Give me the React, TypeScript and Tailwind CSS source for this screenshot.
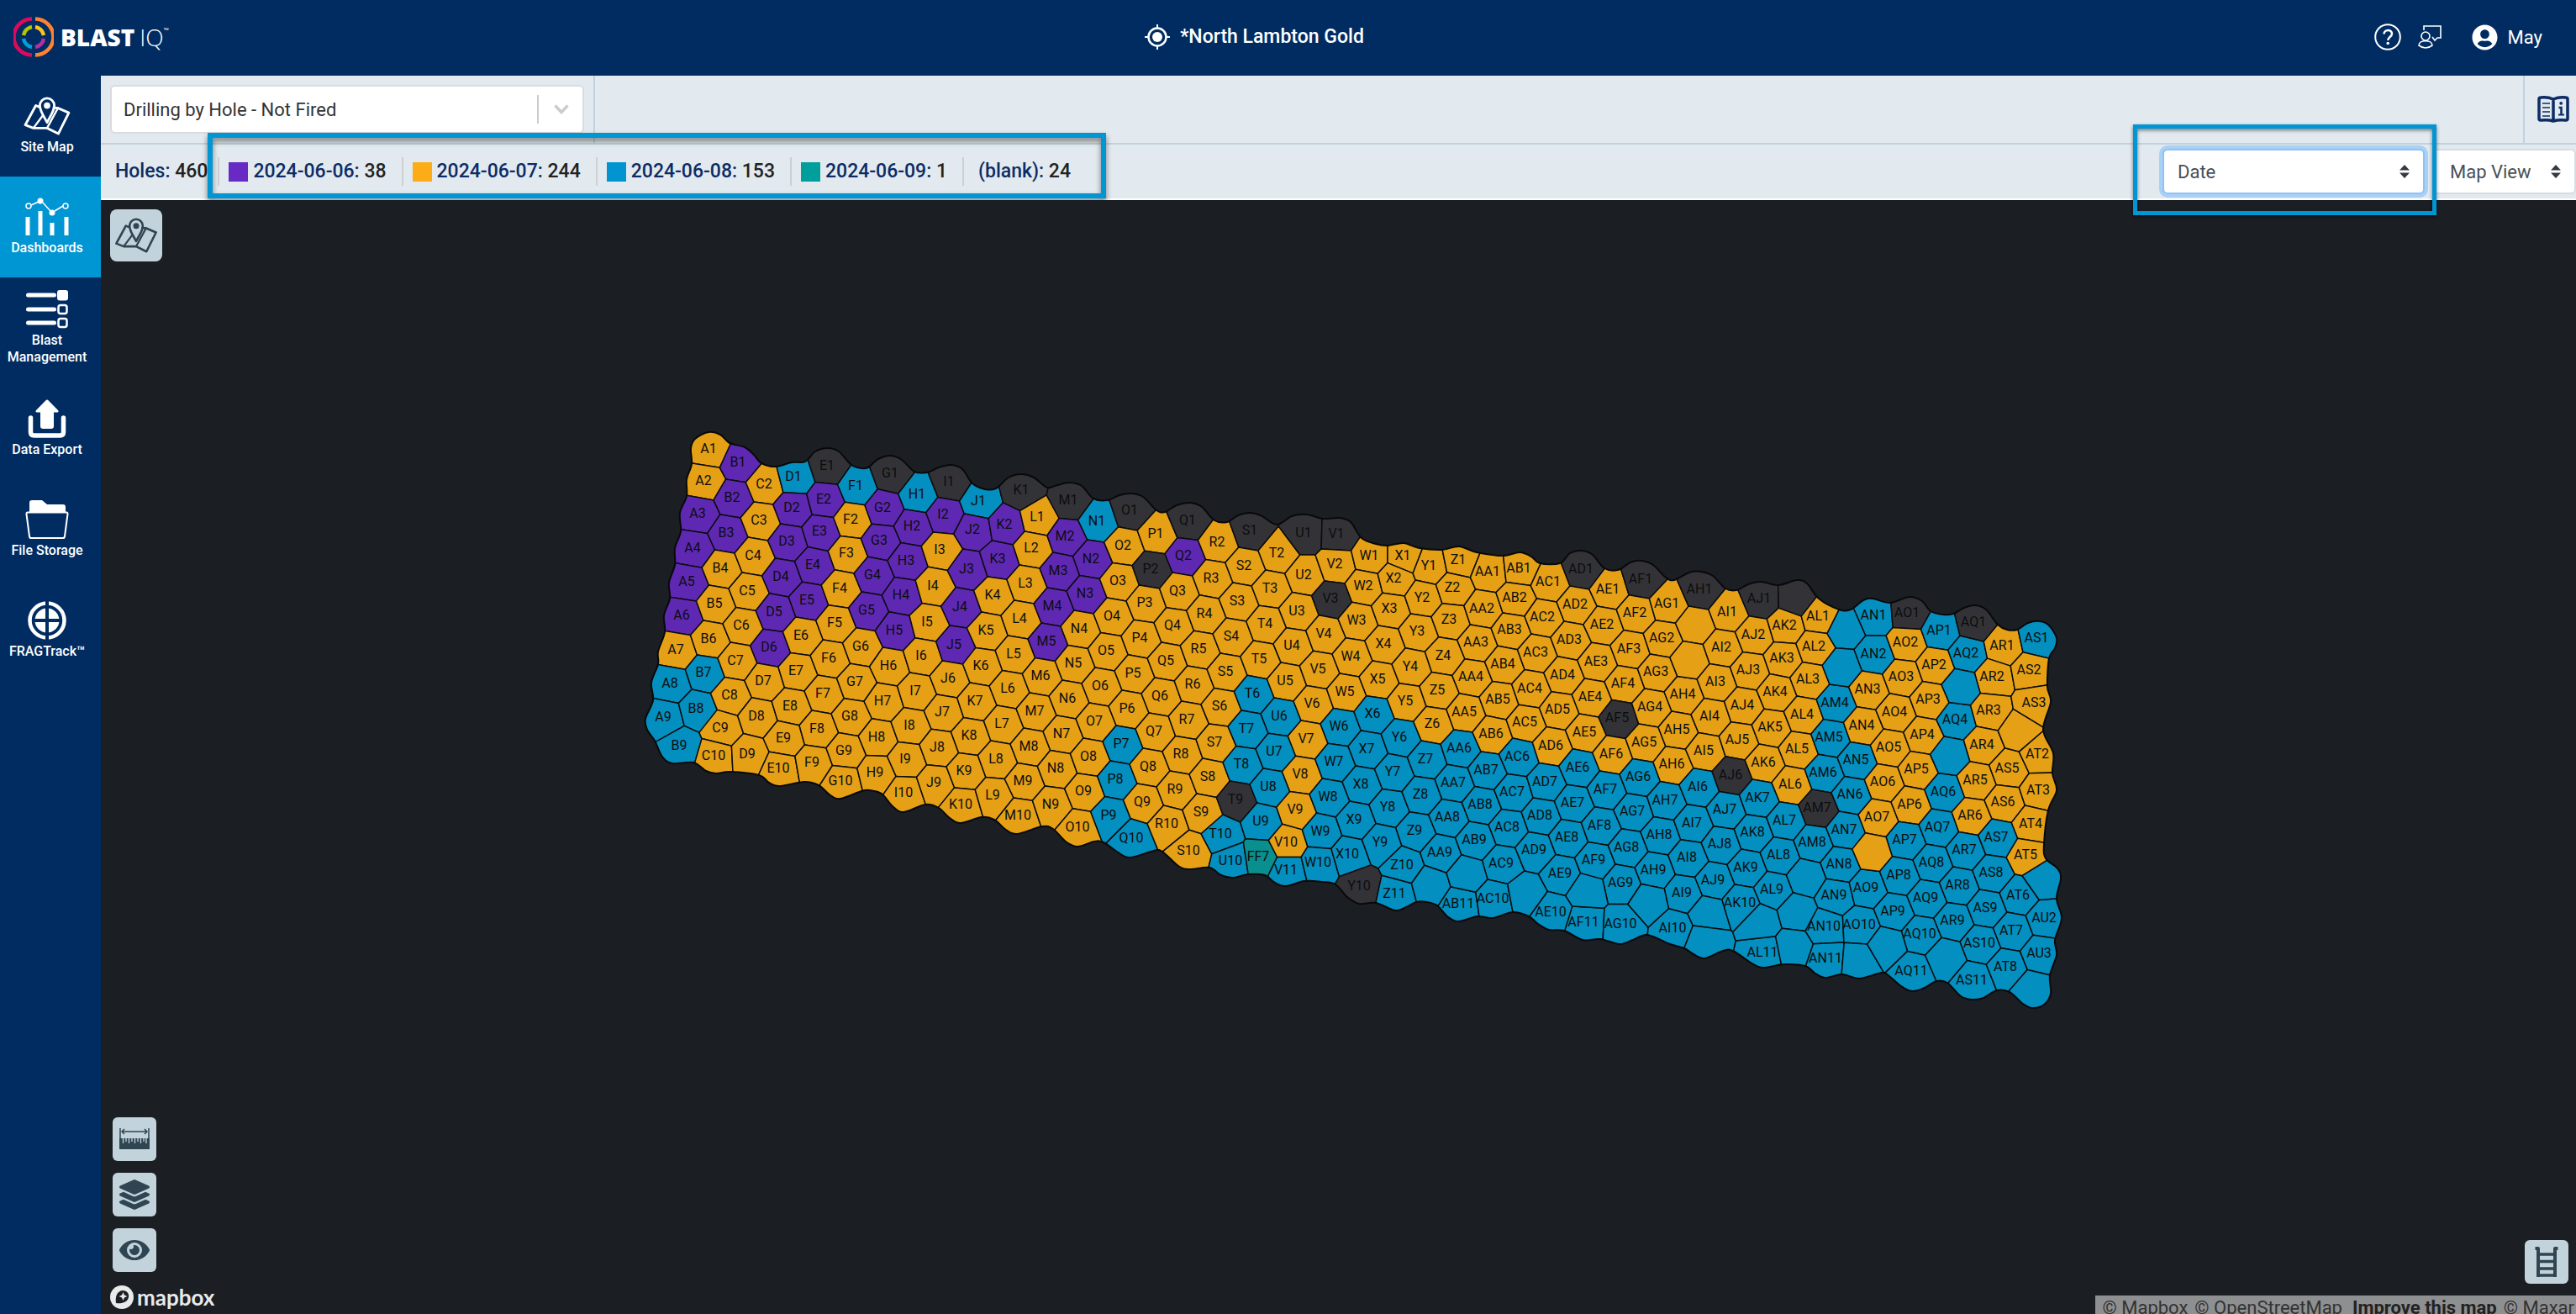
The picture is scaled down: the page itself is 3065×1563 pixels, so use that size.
import type { ReactNode } from 'react';
import { FaEye, FaLayerGroup, FaUserCircle } from 'react-icons/fa';

type Point = [number, number];

type Column = {
  name: string;
  first: number;
  fill: string; // one letter per hole, see CELL_COLORS
  at: number[]; // x, y pairs
};

const CELL_COLORS: Record<string, string> = {
  o: '#e5a016',
  p: '#5f28b3',
  b: '#038fbf',
  t: '#098f8d',
  k: '#333337',
};

const LABEL_SHIFT = 2;

const columns: Column[] = [
  { name: 'A', first: 1, fill: 'ooppppobb', at: [843, 533, 837, 571, 830, 610, 824, 651, 817, 691, 811, 731, 804, 772, 797, 812, 789, 852] },
  { name: 'B', first: 1, fill: 'pppooobbb', at: [878, 549, 871, 591, 864, 633, 857, 675, 850, 717, 843, 759, 837, 799, 828, 842, 808, 886] },
  { name: 'C', first: 2, fill: 'ooooooooo', at: [909, 575, 903, 618, 896, 660, 889, 702, 882, 743, 875, 785, 868, 826, 857, 865, 849, 898] },
  { name: 'D', first: 1, fill: 'bpppppooo', at: [944, 566, 942, 603, 936, 643, 929, 685, 921, 727, 915, 769, 908, 809, 900, 851, 889, 896] },
  { name: 'E', first: 1, fill: 'kppppooooo', at: [984, 553, 980, 593, 975, 631, 967, 671, 960, 713, 953, 755, 947, 797, 940, 839, 932, 877, 926, 913] },
  { name: 'F', first: 1, fill: 'boooooooo', at: [1018, 577, 1012, 617, 1007, 657, 999, 699, 993, 740, 986, 782, 979, 824, 972, 866, 966, 906] },
  { name: 'G', first: 1, fill: 'kppppooooo', at: [1059, 562, 1050, 603, 1046, 642, 1038, 683, 1031, 725, 1024, 768, 1017, 810, 1011, 851, 1004, 892, 1000, 928] },
  { name: 'H', first: 1, fill: 'bppppoooo', at: [1091, 587, 1085, 625, 1078, 666, 1072, 707, 1064, 749, 1057, 791, 1050, 833, 1043, 876, 1041, 918] },
  { name: 'I', first: 1, fill: 'kpoooooooo', at: [1129, 572, 1122, 611, 1118, 653, 1110, 696, 1103, 739, 1096, 779, 1089, 821, 1082, 862, 1077, 902, 1075, 942] },
  { name: 'J', first: 1, fill: 'bppppoooo', at: [1164, 595, 1157, 629, 1150, 676, 1142, 721, 1135, 766, 1128, 806, 1121, 846, 1115, 888, 1111, 930] },
  { name: 'K', first: 1, fill: 'kppooooooo', at: [1215, 582, 1195, 623, 1187, 664, 1181, 707, 1173, 749, 1167, 791, 1160, 833, 1153, 874, 1147, 916, 1143, 956] },
  { name: 'L', first: 1, fill: 'ooooooooo', at: [1234, 614, 1227, 651, 1220, 693, 1213, 735, 1206, 777, 1199, 818, 1192, 860, 1185, 902, 1181, 945] },
  { name: 'M', first: 1, fill: 'kppppooooo', at: [1271, 594, 1267, 637, 1259, 678, 1252, 720, 1245, 762, 1238, 803, 1231, 845, 1224, 887, 1217, 928, 1211, 969] },
  { name: 'N', first: 1, fill: 'bppoooooo', at: [1305, 619, 1298, 664, 1291, 705, 1284, 747, 1277, 788, 1270, 830, 1263, 872, 1256, 913, 1250, 956] },
  { name: 'O', first: 1, fill: 'kooooooooo', at: [1344, 606, 1336, 648, 1330, 690, 1323, 732, 1316, 773, 1309, 815, 1302, 857, 1295, 899, 1289, 940, 1282, 983] },
  { name: 'P', first: 1, fill: 'okoooobbb', at: [1375, 634, 1369, 676, 1362, 716, 1356, 758, 1348, 800, 1341, 842, 1334, 884, 1327, 926, 1319, 969] },
  { name: 'Q', first: 1, fill: 'kpooooooob', at: [1413, 618, 1408, 660, 1401, 702, 1395, 743, 1387, 785, 1380, 827, 1373, 869, 1366, 911, 1359, 953, 1346, 996] },
  { name: 'R', first: 2, fill: 'ooooooooo', at: [1448, 644, 1441, 687, 1433, 729, 1426, 771, 1419, 813, 1412, 855, 1405, 896, 1398, 938, 1388, 979] },
  { name: 'S', first: 1, fill: 'kooooooooo', at: [1487, 630, 1480, 672, 1472, 714, 1465, 756, 1458, 798, 1451, 839, 1445, 882, 1437, 923, 1429, 965, 1414, 1011] },
  { name: 'T', first: 2, fill: 'oooobbbkb', at: [1519, 657, 1511, 699, 1505, 741, 1498, 783, 1490, 824, 1483, 866, 1477, 908, 1470, 950, 1452, 991] },
  { name: 'U', first: 1, fill: 'koooobbbbb', at: [1551, 633, 1551, 683, 1543, 726, 1537, 767, 1529, 809, 1522, 851, 1516, 893, 1509, 935, 1500, 976, 1464, 1023] },
  { name: 'FF', first: 7, fill: 't', at: [1497, 1018] },
  { name: 'V', first: 1, fill: 'kokooooooob', at: [1590, 634, 1588, 670, 1583, 711, 1575, 753, 1568, 795, 1561, 836, 1554, 878, 1547, 920, 1541, 962, 1530, 1001, 1530, 1034] },
  { name: 'W', first: 1, fill: 'ooooobbbbb', at: [1629, 660, 1622, 696, 1614, 737, 1607, 780, 1600, 822, 1593, 863, 1587, 905, 1580, 947, 1571, 988, 1568, 1025] },
  { name: 'X', first: 1, fill: 'ooooobbbbb', at: [1669, 660, 1658, 687, 1653, 723, 1646, 765, 1639, 807, 1633, 848, 1626, 890, 1619, 932, 1611, 974, 1603, 1015] },
  { name: 'Y', first: 1, fill: 'ooooobbbbk', at: [1700, 672, 1692, 710, 1686, 750, 1678, 792, 1672, 833, 1665, 876, 1657, 917, 1651, 959, 1642, 1001, 1617, 1053] },
  { name: 'Z', first: 1, fill: 'oooooobbbbb', at: [1735, 665, 1728, 698, 1724, 736, 1717, 779, 1710, 820, 1704, 860, 1696, 902, 1690, 944, 1683, 987, 1668, 1028, 1659, 1062] },
  { name: 'AA', first: 1, fill: 'ooooobbbb', at: [1770, 679, 1763, 723, 1756, 763, 1750, 804, 1742, 846, 1736, 889, 1729, 930, 1722, 971, 1713, 1013] },
  { name: 'AB', first: 1, fill: 'oooooobbb', at: [1807, 675, 1802, 710, 1796, 748, 1788, 789, 1782, 831, 1774, 872, 1768, 915, 1761, 956, 1754, 998] },
  { name: 'AB', first: 11, fill: 'b', at: [1735, 1074] },
  { name: 'AC', first: 1, fill: 'ooooobbbbb', at: [1842, 691, 1835, 733, 1827, 775, 1820, 818, 1814, 858, 1805, 899, 1799, 941, 1793, 983, 1786, 1026, 1776, 1068] },
  { name: 'AD', first: 1, fill: 'kooooobbb', at: [1881, 676, 1874, 718, 1867, 760, 1859, 802, 1853, 843, 1845, 886, 1838, 929, 1832, 969, 1825, 1010] },
  { name: 'AE', first: 1, fill: 'ooooobbbbb', at: [1913, 700, 1906, 742, 1899, 786, 1892, 828, 1885, 870, 1877, 912, 1871, 954, 1864, 995, 1856, 1038, 1845, 1084] },
  { name: 'AF', first: 1, fill: 'koookobbb', at: [1952, 688, 1945, 728, 1938, 771, 1931, 812, 1924, 853, 1917, 896, 1910, 938, 1903, 981, 1896, 1022] },
  { name: 'AF', first: 11, fill: 'b', at: [1884, 1096] },
  { name: 'AG', first: 1, fill: 'ooooobbbbb', at: [1983, 717, 1977, 758, 1970, 798, 1963, 840, 1956, 882, 1949, 923, 1942, 964, 1935, 1007, 1928, 1049, 1928, 1098] },
  { name: 'AH', first: 1, fill: 'k', at: [2022, 700] },
  { name: 'AH', first: 4, fill: 'ooobbb', at: [2002, 825, 1995, 867, 1989, 908, 1981, 951, 1974, 992, 1967, 1034] },
  { name: 'AI', first: 1, fill: 'ooooobbbbb', at: [2055, 727, 2048, 769, 2041, 810, 2034, 851, 2027, 892, 2020, 935, 2013, 978, 2007, 1019, 2001, 1061, 1990, 1103] },
  { name: 'AJ', first: 1, fill: 'kooookbbb', at: [2093, 711, 2086, 754, 2080, 796, 2073, 838, 2067, 879, 2059, 921, 2052, 962, 2046, 1003, 2038, 1046] },
  { name: 'AK', first: 2, fill: 'ooooobbbb', at: [2123, 743, 2120, 782, 2112, 822, 2106, 864, 2098, 906, 2091, 948, 2085, 989, 2077, 1031, 2070, 1073] },
  { name: 'AL', first: 1, fill: 'oooooobbb', at: [2163, 732, 2158, 768, 2151, 807, 2144, 849, 2138, 890, 2130, 932, 2123, 975, 2116, 1016, 2108, 1057] },
  { name: 'AL', first: 11, fill: 'b', at: [2097, 1132] },
  { name: 'AM', first: 4, fill: 'bbbkb', at: [2183, 835, 2176, 876, 2169, 918, 2162, 960, 2156, 1001] },
  { name: 'AN', first: 1, fill: 'bboobbbbbbb', at: [2229, 731, 2229, 777, 2222, 819, 2215, 862, 2208, 903, 2201, 944, 2194, 986, 2188, 1027, 2182, 1064, 2170, 1101, 2172, 1139] },
  { name: 'AO', first: 1, fill: 'koooooo', at: [2269, 728, 2267, 763, 2262, 804, 2254, 846, 2247, 888, 2240, 929, 2233, 971] },
  { name: 'AO', first: 9, fill: 'bb', at: [2220, 1055, 2212, 1099] },
  { name: 'AP', first: 1, fill: 'booooobbb', at: [2307, 749, 2301, 790, 2294, 831, 2287, 873, 2280, 914, 2272, 956, 2266, 998, 2259, 1040, 2252, 1083] },
  { name: 'AQ', first: 1, fill: 'kb', at: [2348, 739, 2339, 776] },
  { name: 'AQ', first: 4, fill: 'b', at: [2326, 855] },
  { name: 'AQ', first: 6, fill: 'bbbbbb', at: [2312, 941, 2305, 983, 2298, 1025, 2291, 1067, 2284, 1110, 2274, 1154] },
  { name: 'AR', first: 1, fill: 'oooooobbb', at: [2382, 767, 2370, 804, 2366, 844, 2358, 885, 2350, 927, 2344, 969, 2337, 1010, 2329, 1052, 2323, 1094] },
  { name: 'AS', first: 1, fill: 'boo', at: [2423, 758, 2414, 796, 2420, 835] },
  { name: 'AS', first: 5, fill: 'oobbbbb', at: [2388, 913, 2383, 953, 2375, 995, 2369, 1037, 2362, 1079, 2355, 1121, 2346, 1165] },
  { name: 'AT', first: 2, fill: 'oooobbb', at: [2424, 896, 2425, 939, 2416, 979, 2410, 1016, 2401, 1064, 2393, 1106, 2386, 1149] },
  { name: 'AU', first: 2, fill: 'bb', at: [2432, 1091, 2426, 1133] },
  // holes without a label
  {
    name: '',
    first: 0,
    fill: 'bbbbboobbbkbbbbbbobbbbbobb',
    at: [
      1700, 1051, 1743, 1038, 1813, 1061, 1886, 1058, 1960, 1070, 2015, 742, 2008, 783, 2030, 1085, 2026, 1117, 2093, 1095,
      2135, 710, 2193, 747, 2189, 792, 2147, 1042, 2136, 1083, 2131, 1125, 2209, 1142, 2225, 1011, 2243, 1122, 2331, 815,
      2318, 897, 2313, 1137, 2428, 1045, 2400, 868, 2416, 1175,
    ],
  },
];

const outline = [
  822, 533, 827, 522, 843, 514, 857, 517, 868, 527, 886, 532, 897, 541, 906, 551, 923, 555, 942, 550, 958, 549, 970, 537,
  985, 533, 998, 537, 1013, 553, 1025, 557, 1033, 556, 1045, 546, 1060, 542, 1073, 547, 1088, 561, 1103, 562, 1117, 556,
  1132, 553, 1145, 558, 1157, 575, 1172, 582, 1185, 581, 1200, 568, 1215, 564, 1230, 568, 1246, 580, 1258, 577, 1273, 574,
  1287, 578, 1301, 593, 1318, 595, 1332, 589, 1346, 587, 1360, 591, 1376, 607, 1386, 609, 1400, 601, 1416, 598, 1430, 603,
  1445, 619, 1460, 621, 1473, 613, 1487, 610, 1500, 613, 1519, 624, 1537, 614, 1555, 612, 1574, 617, 1593, 616, 1607, 621,
  1620, 640, 1637, 647, 1651, 649, 1670, 646, 1689, 652, 1715, 654, 1736, 650, 1757, 657, 1788, 661, 1808, 657, 1822, 662,
  1832, 670, 1856, 670, 1868, 658, 1882, 655, 1895, 660, 1909, 676, 1925, 678, 1940, 669, 1953, 667, 1967, 672, 1982, 687,
  1992, 690, 2010, 681, 2024, 680, 2038, 685, 2053, 700, 2066, 702, 2080, 695, 2095, 692, 2116, 696, 2138, 690, 2150, 694,
  2164, 712, 2188, 725, 2202, 725, 2217, 714, 2228, 712, 2249, 717, 2272, 710, 2287, 715, 2297, 727, 2312, 731, 2324, 730,
  2337, 723, 2350, 720, 2363, 725, 2377, 743, 2388, 749, 2400, 749, 2413, 741, 2427, 739, 2438, 744, 2447, 759, 2445, 771,
  2438, 783, 2436, 817, 2440, 835, 2431, 868, 2443, 896, 2442, 920, 2447, 940, 2437, 964, 2432, 1004, 2434, 1021,
  2448, 1033, 2452, 1045, 2447, 1069, 2453, 1092, 2445, 1118, 2447, 1136, 2439, 1160, 2440, 1182, 2432, 1195, 2418, 1199,
  2407, 1194, 2391, 1180, 2376, 1178, 2360, 1187, 2347, 1189, 2333, 1185, 2317, 1169, 2304, 1167, 2290, 1175, 2275, 1179,
  2262, 1173, 2244, 1158, 2235, 1158, 2212, 1164, 2192, 1159, 2172, 1163, 2160, 1158, 2148, 1149, 2123, 1147, 2097, 1151,
  2083, 1145, 2062, 1131, 2050, 1131, 2028, 1140, 2015, 1135, 2004, 1128, 1987, 1123, 1960, 1112, 1943, 1118, 1927, 1123,
  1904, 1117, 1883, 1118, 1861, 1107, 1843, 1106, 1830, 1099, 1819, 1090, 1800, 1085, 1776, 1092, 1758, 1090, 1735, 1096,
  1722, 1090, 1710, 1077, 1698, 1073, 1685, 1073, 1673, 1079, 1660, 1083, 1637, 1074, 1617, 1075, 1603, 1067, 1589, 1052,
  1573, 1049, 1552, 1048, 1530, 1054, 1517, 1050, 1505, 1041, 1485, 1040, 1467, 1044, 1453, 1041, 1439, 1032, 1415, 1034,
  1402, 1030, 1383, 1013, 1373, 1012, 1345, 1020, 1332, 1015, 1313, 1002, 1302, 1001, 1282, 1007, 1268, 1001, 1253, 986,
  1240, 983, 1210, 992, 1197, 987, 1183, 975, 1168, 972, 1143, 979, 1130, 973, 1117, 961, 1101, 957, 1075, 966, 1062, 959,
  1049, 944, 1035, 940, 1025, 941, 1000, 950, 988, 946, 974, 934, 957, 930, 927, 935, 915, 931, 903, 922, 869, 918,
  852, 920, 840, 917, 825, 907, 800, 908, 788, 900, 779, 881, 770, 868, 768, 855, 777, 833, 775, 812, 783, 790, 783, 775,
  791, 752, 790, 732, 797, 712, 796, 693, 803, 672, 803, 652, 810, 632, 809, 610, 817, 590, 817, 570, 823, 552,
];

function toPoints(flat: number[]): Point[] {
  const points: Point[] = [];
  for (let i = 0; i + 1 < flat.length; i += 2) points.push([flat[i], flat[i + 1]]);
  return points;
}

// closed Catmull-Rom curve through the points
function smoothPath(points: Point[]) {
  const n = points.length;
  let d = `M${points[0][0]} ${points[0][1]}`;
  for (let i = 0; i < n; i++) {
    const [p0, p1, p2, p3] = [points[(i + n - 1) % n], points[i], points[(i + 1) % n], points[(i + 2) % n]];
    const c1 = [p1[0] + (p2[0] - p0[0]) / 6, p1[1] + (p2[1] - p0[1]) / 6];
    const c2 = [p2[0] - (p3[0] - p1[0]) / 6, p2[1] - (p3[1] - p1[1]) / 6];
    d += `C${c1[0].toFixed(1)} ${c1[1].toFixed(1)} ${c2[0].toFixed(1)} ${c2[1].toFixed(1)} ${p2[0]} ${p2[1]}`;
  }
  return d + 'Z';
}

// Voronoi cell: a box around the site, cut by the bisector to each neighbour
function voronoiCell(site: Point, sites: Point[]): Point[] {
  const [sx, sy] = site;
  let cell: Point[] = [[sx - 70, sy - 70], [sx + 70, sy - 70], [sx + 70, sy + 70], [sx - 70, sy + 70]];
  for (const [x, y] of sites) {
    const nx = x - sx;
    const ny = y - sy;
    const len = nx * nx + ny * ny;
    if (len === 0 || len > 40000) continue;
    const side = (p: Point) => (p[0] - sx) * nx + (p[1] - sy) * ny - len / 2;
    const next: Point[] = [];
    cell.forEach((a, i) => {
      const b = cell[(i + 1) % cell.length];
      const da = side(a);
      const db = side(b);
      if (da <= 0) next.push(a);
      if (da * db < 0) {
        const t = da / (da - db);
        next.push([a[0] + (b[0] - a[0]) * t, a[1] + (b[1] - a[1]) * t]);
      }
    });
    cell = next;
  }
  return cell;
}

const holes = columns.flatMap((col) =>
  toPoints(col.at).map(([x, y], i) => ({
    label: col.name ? `${col.name}${col.first + i}` : '',
    x,
    y,
    color: CELL_COLORS[col.fill[i]],
  })),
);
const sites: Point[] = holes.map((h) => [h.x + LABEL_SHIFT, h.y + LABEL_SHIFT]);
const cells = sites.map((site) =>
  voronoiCell(site, sites)
    .map((p) => `${p[0].toFixed(1)},${p[1].toFixed(1)}`)
    .join(' '),
);
const outlinePath = smoothPath(toPoints(outline));

function BlastMap() {
  return (
    <svg viewBox="120 238 2945 1325" className="absolute inset-0 h-full w-full" role="img" aria-label="Blast holes by drilling date">
      <clipPath id="blast-outline">
        <path d={outlinePath} />
      </clipPath>
      <g clipPath="url(#blast-outline)" stroke="#0b0c0e" strokeWidth={1.5} strokeLinejoin="round">
        {cells.map((points, i) => (
          <polygon key={i} points={points} fill={holes[i].color} />
        ))}
      </g>
      <path d={outlinePath} fill="none" stroke="#08090a" strokeWidth={2} />
      <g className="font-['Roboto',sans-serif] text-[16px]" fill="#0c0d0e" textAnchor="middle">
        {holes.map((h, i) => h.label && <text key={i} x={h.x} y={h.y + 6}>{h.label}</text>)}
      </g>
    </svg>
  );
}

function MapPinIcon({ className }: { className?: string }) {
  return (
    <svg viewBox="0 0 58 48" className={className} fill="none" stroke="currentColor" strokeWidth={3} strokeLinejoin="round" aria-hidden="true">
      <path d="M20 13 15 11 2 35l10 4h17l14 7L56 20 42 14l-6 0" />
      <path d="M12 39 24 23M29 39 42 15" strokeWidth={2.5} />
      <path d="M29 32C25 24 20 18 20 11a9 9 0 0 1 18 0c0 7-5 13-9 21Z" />
      <circle cx="29" cy="11" r="4" fill="currentColor" stroke="none" />
    </svg>
  );
}

function ChartIcon() {
  return (
    <svg viewBox="0 0 52 46" className="h-[46px] w-[52px]" stroke="white" aria-hidden="true">
      <path d="M3 23v22M18 16v29M32 30v15M49 23v22" strokeWidth={5} fill="none" />
      <path d="M7 9 16 5M21 6l9 10M35 16l10-6" strokeWidth={1.5} fill="none" />
      <circle cx="4" cy="10" r="3" fill="none" strokeWidth={1.5} />
      <circle cx="48" cy="10" r="3" fill="none" strokeWidth={1.5} />
      <circle cx="18" cy="4" r="3.5" fill="white" stroke="none" />
      <circle cx="32" cy="18" r="3.5" fill="white" stroke="none" />
    </svg>
  );
}

function BlastIcon() {
  return (
    <svg viewBox="0 0 50 46" className="h-[46px] w-[50px]" aria-hidden="true">
      <path d="M2.5 6h31M2.5 23h31M2.5 39h31" stroke="white" strokeWidth={5} strokeLinecap="round" />
      <rect x="37" y="0" width="13" height="12.5" rx="3" fill="white" />
      <rect x="38.5" y="18" width="10" height="10" rx="2.5" fill="none" stroke="white" strokeWidth={2.5} />
      <rect x="38.5" y="34" width="10" height="10" rx="2.5" fill="none" stroke="white" strokeWidth={2.5} />
    </svg>
  );
}

function ExportIcon() {
  return (
    <svg viewBox="0 0 46 46" className="h-[46px] w-[46px]" aria-hidden="true">
      <path d="M3.5 22v17q0 4 4 4h31q4 0 4-4V22" fill="none" stroke="white" strokeWidth={5.5} strokeLinecap="round" />
      <path d="M22 .8q1-.8 2 0L36 13q1.5 2-1 2.5h-4V32q0 3-3 3H18q-3 0-3-3V15.500h-4q-2.500-.5-1-2.500Z" fill="white" />
    </svg>
  );
}

function FolderIcon() {
  return (
    <svg viewBox="0 0 52 46" className="h-[46px] w-[52px]" aria-hidden="true">
      <path d="M5 14V3q0-3 3-3h12l6 5h19q3 0 3 3v6Z" fill="white" />
      <path d="M1.5 16.5q-.3-2 1.5-2h46q1.8 0 1.5 2L47 43q-.3 2-2 2H7q-1.700 0-2-2Z" fill="#002c62" stroke="white" strokeWidth={2} />
    </svg>
  );
}

function FragIcon() {
  return (
    <svg viewBox="0 0 46 46" className="h-[46px] w-[46px]" aria-hidden="true">
      <circle cx="23" cy="23" r="20.5" fill="none" stroke="white" strokeWidth={4.5} />
      <circle cx="23" cy="23" r="14.5" fill="white" />
      <path d="M23 0v46" stroke="#002c62" strokeWidth={4} />
      <path d="M6 23h34" stroke="#002c62" strokeWidth={4} />
    </svg>
  );
}

const navItems: { label: string; icon: ReactNode; active?: boolean }[] = [
  { label: 'Site Map', icon: <MapPinIcon className="h-[46px] w-[58px]" /> },
  { label: 'Dashboards', icon: <ChartIcon />, active: true },
  { label: 'Blast Management', icon: <BlastIcon /> },
  { label: 'Data Export', icon: <ExportIcon /> },
  { label: 'File Storage', icon: <FolderIcon /> },
  { label: 'FRAGTrack™', icon: <FragIcon /> },
];

const legend = [
  { label: '2024-06-06', count: 38, swatch: 'bg-[#6829c4]' },
  { label: '2024-06-07', count: 244, swatch: 'bg-[#fbac16]' },
  { label: '2024-06-08', count: 153, swatch: 'bg-[#0095d0]' },
  { label: '2024-06-09', count: 1, swatch: 'bg-[#009f9b]' },
  { label: '(blank)', count: 24, swatch: '' },
];

function Logo() {
  return (
    <a href="#" className="flex items-center gap-2 text-white" aria-label="BlastIQ">
      <svg viewBox="0 0 48 48" className="h-12 w-12" fill="none" strokeWidth={4.5} aria-hidden="true">
        <path d="M22 2.500a21.500 21.500 0 0 0 0 43" stroke="#dd0a5c" />
        <path d="M26 2.500a21.500 21.500 0 0 1 0 43" stroke="#ff8132" />
        <path d="M22 12a12.500 12.500 0 0 0-10 10" stroke="#b7c400" />
        <path d="M26 12a12.500 12.500 0 0 1 10 10" stroke="#fdc51b" />
        <path d="M22 36a12.500 12.500 0 0 1-10-10" stroke="#00a0d6" />
        <path d="M26 36a12.500 12.500 0 0 0 10-10" stroke="#b52fa5" />
      </svg>
      <span className="flex items-start font-['Open_Sans',sans-serif] text-[28px] leading-8">
        <span className="font-extrabold">BLAST</span>
        <span className="ml-1.5 font-light">IQ</span>
        <span className="text-[8px] leading-4">™</span>
      </span>
    </a>
  );
}

function Header() {
  return (
    <header className="grid h-[90px] shrink-0 grid-cols-3 items-center bg-[#002c62] pr-10 pb-0.5 pl-4 text-[22px] text-white">
      <Logo />
      <h1 className="flex items-center justify-center gap-3 pr-14 text-[23px] font-medium">
        <svg viewBox="0 0 30 30" className="h-[30px] w-[30px]" fill="none" stroke="white" strokeWidth={2} aria-hidden="true">
          <circle cx="15" cy="15" r="10.5" strokeWidth={2.5} />
          <circle cx="15" cy="15" r="6" fill="white" stroke="none" />
          <path d="M15 0v5M15 25v5M0 15h5M25 15h5" />
        </svg>
        *North Lambton Gold
      </h1>
      <div className="flex items-center justify-end">
        <button type="button" aria-label="Help">
          <svg viewBox="0 0 32 32" className="h-8 w-8" fill="none" stroke="white" aria-hidden="true">
            <circle cx="16" cy="16" r="14.800" strokeWidth={2} />
            <path d="M11.500 12.500c0-6 9.500-6 9.500-.5 0 4-4.800 4-4.800 8" strokeWidth={2.5} />
            <circle cx="16.200" cy="23.500" r="1.800" fill="white" stroke="none" />
          </svg>
        </button>
        <button type="button" className="ml-5" aria-label="Feedback">
          <svg viewBox="0 0 28 28" className="h-7 w-7" fill="none" stroke="white" strokeWidth={1.6} aria-hidden="true">
            <path d="M7 6V1h20v14h-4l-3 3-3-4" />
            <circle cx="9" cy="13" r="5" />
            <path d="M1 24c0-7 16-7 16 0q-8 6-16 0Z" />
          </svg>
        </button>
        <button type="button" className="ml-9 flex items-center gap-3">
          <FaUserCircle className="h-[31px] w-[31px]" aria-hidden="true" />
          May
        </button>
      </div>
    </header>
  );
}

function Sidebar() {
  return (
    <nav className="flex w-[120px] shrink-0 flex-col bg-[#002c62] text-[16px] leading-5 font-medium text-white">
      {navItems.map((item) => (
        <a
          key={item.label}
          href="#"
          className={`flex h-[120px] flex-col items-center justify-center gap-1 pr-4 pl-2 text-center ${item.active ? 'bg-[#0095d3]' : ''}`}
        >
          {item.icon}
          <span>{item.label}</span>
        </a>
      ))}
    </nav>
  );
}

function Toolbar() {
  return (
    <div className="flex h-[82px] shrink-0 items-stretch border-b-2 border-[#c1d2dc]">
      <div className="flex items-center border-r-2 border-[#c1d2dc] px-[11px]">
        <div className="relative">
          <select
            aria-label="Dashboard"
            className="h-[58px] w-[564px] appearance-none rounded-md border-2 border-[#d8dcdf] bg-white px-3.5 text-[22px] text-[#333]"
          >
            <option>Drilling by Hole - Not Fired</option>
          </select>
          <div className="pointer-events-none absolute inset-y-3 right-0 flex w-14 items-center justify-center border-l-2 border-[#ccc]">
            <svg viewBox="0 0 18 12" className="h-3 w-[18px]" fill="none" stroke="#ccc" strokeWidth={3.5} aria-hidden="true">
              <path d="m1.500 1.500 7.500 8 7.500-8" />
            </svg>
          </div>
        </div>
      </div>
      <button type="button" aria-label="Guide" className="ml-auto flex w-[63px] items-center justify-center border-l-2 border-[#c1d2dc] pl-1.5">
        <svg viewBox="0 0 38 33" className="h-[33px] w-[38px]" fill="none" stroke="#0d2c66" aria-hidden="true">
          <path d="M19 4Q12 1 4 2 2 2 2 4v23q0 2 2 2 9-1 15 1 6-2 15-1 2 0 2-2V4q0-2-2-2-8-1-15 2Zm0 0v27" strokeWidth={3.5} />
          <path d="M6 9h9M6 14h9M6 19h9M6 24h9" strokeWidth={1.5} />
          <path d="M25.500 14h3v8" strokeWidth={2.5} />
          <path d="M25 22.500h7" strokeWidth={2} />
          <circle cx="28.200" cy="8.800" r="1.900" fill="#0d2c66" stroke="none" />
        </svg>
      </button>
    </div>
  );
}

function Carets() {
  return (
    <svg viewBox="0 0 12 16" className="pointer-events-none absolute top-1/2 right-[18px] h-4 w-3 -translate-y-1/2" fill="#343a40" aria-hidden="true">
      <path d="M6 0 12 6.500H0ZM6 16 0 9.500H12Z" />
    </svg>
  );
}

function LegendBar() {
  return (
    <div className="flex h-[66px] shrink-0 items-center border-b-2 border-white pl-[17px] text-[22px] font-medium">
      <span className="text-[23px] text-[#0d2c66]">
        Holes: <span className="text-[#222]">460</span>
      </span>
      <div className="relative flex h-full items-center pr-6 pl-3 text-[23px]">
        {legend.map((item) => (
          <div key={item.label} className="flex h-[34px] items-center border-l-2 border-[#ccd0d2] pr-[18px] pl-[11px]">
            {item.swatch ? <span className={`mr-1.5 h-[23px] w-[23px] ${item.swatch}`} /> : <span className="w-1.5" />}
            <span className="text-[#0d2c66]">
              {item.label}: <span className="text-[#222]">{item.count}</span>
            </span>
          </div>
        ))}
        <div className="pointer-events-none absolute inset-x-0 -top-3.5 bottom-0 border-[6px] border-[#0095d3] drop-shadow-[0_4px_3px_rgba(0,0,0,0.5)]" />
      </div>
      <div className="relative z-10 ml-auto flex h-full items-center pr-3.5 pl-[35px]">
        <div className="relative">
          <select
            aria-label="Group by"
            className="h-[54px] w-[312px] appearance-none rounded-md border-2 border-[#8fc2f5] bg-white px-4 font-normal text-[#495057] ring-4 ring-[#a9d0f5]"
          >
            <option>Date</option>
          </select>
          <Carets />
        </div>
        <div className="pointer-events-none absolute inset-x-0 -top-6 -bottom-5 border-[5px] border-[#0095d3] drop-shadow-[0_2px_2px_rgba(0,0,0,0.5)]" />
      </div>
      <div className="relative">
        <select
          aria-label="View"
          className="h-[54px] w-[166px] appearance-none rounded-r-md border-2 border-l-0 border-[#d5dde2] bg-white px-4 font-normal text-[#495057]"
        >
          <option>Map View</option>
        </select>
        <Carets />
      </div>
    </div>
  );
}

const mapButton = 'flex h-[52px] w-[52px] items-center justify-center rounded-md bg-[#c3d3dc] text-[#2f4552]';

function MapArea() {
  return (
    <main className="relative min-h-0 flex-1 overflow-hidden bg-[#1b1e23]">
      <BlastMap />
      <button type="button" aria-label="Zoom to site" className="absolute top-[11px] left-[11px] flex h-[62px] w-[62px] items-center justify-center rounded-lg bg-[#c3d3dc] text-[#2f4552]">
        <MapPinIcon className="h-[42px] w-[52px]" />
      </button>
      <div className="absolute bottom-1 left-[11px] flex flex-col items-start gap-3.5">
        <button type="button" aria-label="Measure" className={`ml-[3px] ${mapButton}`}>
          <svg viewBox="0 0 36 26" className="h-[26px] w-9" fill="none" stroke="currentColor" aria-hidden="true">
            <path d="M1 0v12M35 0v12M3 4h30M6 1 3 4l3 3M30 1l3 3-3 3" strokeWidth={1.5} />
            <path d="M0 12h36v13H0Z" fill="currentColor" stroke="none" />
            <path d="M4.500 12v6M8 12v4M11.500 12v6M15 12v4M18.500 12v6M22 12v4M25.500 12v6M29 12v4M32 12v6" stroke="#c3d3dc" strokeWidth={1.3} />
          </svg>
        </button>
        <button type="button" aria-label="Layers" className={`ml-[3px] ${mapButton}`}>
          <FaLayerGroup className="h-9 w-9" />
        </button>
        <button type="button" aria-label="Visibility" className={`ml-[3px] ${mapButton}`}>
          <FaEye className="h-9 w-9" />
        </button>
        <a href="#" className="flex items-center gap-1 font-['Lato',sans-serif] text-[26px] leading-8 font-bold text-[#e9eaea]">
          <svg viewBox="0 0 28 28" className="h-7 w-7" aria-hidden="true">
            <circle cx="14" cy="14" r="14" fill="#e9eaea" />
            <path d="M7 21c-1-8 1-14 8-15 5 0 8 4 7 8-1 6-8 8-15 7Z" fill="#1b1e23" />
            <path d="m15.500 8 1.500 3.500 3.500 1.500-3.500 1.500-1.500 3.500-1.500-3.500-3.500-1.500 3.500-1.500Z" fill="#e9eaea" />
          </svg>
          mapbox
        </a>
      </div>
      <div className="absolute right-0 bottom-0 flex flex-col items-end gap-3.5">
        <button type="button" aria-label="Benches" className={`mr-[9px] ${mapButton}`}>
          <svg viewBox="0 0 30 36" className="h-9 w-[30px]" fill="none" stroke="currentColor" aria-hidden="true">
            <path d="M1.500 2H5v34M28.500 2H25v34" strokeWidth={4} strokeLinejoin="round" />
            <path d="M5 9h20M5 17.500h20M5 26h20M5 34h20" strokeWidth={3.5} />
          </svg>
        </button>
        <div className="flex h-[22px] gap-2 overflow-hidden bg-[#8e8f91] pr-0.5 pl-2 text-[22px] leading-[30px] whitespace-nowrap text-[#333]">
          <a href="#">© Mapbox</a>
          <a href="#">© OpenStreetMap</a>
          <a href="#" className="pl-1 font-bold text-[#222]">Improve this map</a>
          <a href="#">© Maxar</a>
        </div>
      </div>
    </main>
  );
}

export default function App() {
  return (
    <div className="flex h-screen flex-col overflow-hidden font-['Roboto',sans-serif]">
      <Header />
      <div className="flex min-h-0 flex-1">
        <Sidebar />
        <div className="flex min-w-0 flex-1 flex-col bg-[#e2eaef]">
          <Toolbar />
          <LegendBar />
          <MapArea />
        </div>
      </div>
    </div>
  );
}
